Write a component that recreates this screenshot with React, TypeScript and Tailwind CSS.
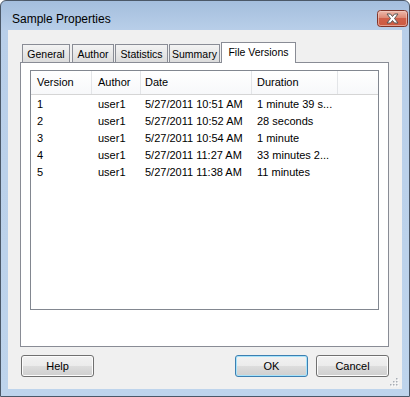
import React from "react";

const rows = [
  { v: "1", a: "user1", d: "5/27/2011 10:51 AM", t: "1 minute 39 s..." },
  { v: "2", a: "user1", d: "5/27/2011 10:52 AM", t: "28 seconds" },
  { v: "3", a: "user1", d: "5/27/2011 10:54 AM", t: "1 minute" },
  { v: "4", a: "user1", d: "5/27/2011 11:27 AM", t: "33 minutes 2..." },
  { v: "5", a: "user1", d: "5/27/2011 11:38 AM", t: "11 minutes" },
];

function CloseButton() {
  return (
    <svg width="31" height="17" viewBox="0 0 31 17">
      <defs>
        <linearGradient id="cb" x1="0" y1="0" x2="0" y2="1">
          <stop offset="0" stopColor="#eebdb0" />
          <stop offset="0.45" stopColor="#dd8a76" />
          <stop offset="0.5" stopColor="#d0604a" />
          <stop offset="1" stopColor="#cd5a40" />
        </linearGradient>
      </defs>
      <rect x="0.5" y="0.5" width="30" height="16" rx="3" fill="url(#cb)" stroke="#80352a" />
      <rect x="1.5" y="1.5" width="28" height="14" rx="2" fill="none" stroke="#f4cfc4" strokeOpacity="0.6" />
      <path
        d="M10 4 L13.5 4 L15.5 6.5 L17.5 4 L21 4 L17.5 8.5 L21 13 L17.5 13 L15.5 10.5 L13.5 13 L10 13 L13.5 8.5 Z"
        fill="#ffffff"
        stroke="#555555"
        strokeWidth="1"
        strokeLinejoin="round"
      />
    </svg>
  );
}

function Tab({ label, w, className = "" }: { label: string; w: string; className?: string }) {
  return (
    <div
      className={`${w} h-[18px] flex items-center justify-center border border-b-0 border-[#898c95] bg-gradient-to-b from-[#f3f3f3] to-[#dcdcdc] text-black text-[10.5px] ${className}`}
    >
      {label}
    </div>
  );
}

function Button({ label, def = false, className = "" }: { label: string; def?: boolean; className?: string }) {
  return (
    <div
      className={`w-[73px] h-[22px] rounded-[3px] border flex items-center justify-center text-black ${
        def
          ? "border-[#3c7fb1] shadow-[inset_0_0_0_1px_#a7e3fb]"
          : "border-[#707070] shadow-[inset_0_0_0_1px_#fcfcfc]"
      } bg-[linear-gradient(to_bottom,#f2f2f2_0%,#ebebeb_50%,#dddddd_50%,#cfcfcf_100%)] ${className}`}
    >
      {label}
    </div>
  );
}

export default function App() {
  return (
    <div className="w-[410px] h-[397px] bg-white font-['Liberation_Sans',Arial,sans-serif] text-[11px]">
      <div className="w-[410px] h-[397px] rounded-t-[6px] border border-[#4b5868] bg-[linear-gradient(to_bottom,#a4bedd_0px,#b9cfe9_30px,#bed4ec_100%)] flex flex-col">
        {/* Title bar */}
        <div className="h-[29px] flex items-start justify-between">
          <div className="pl-[11px] pt-[10px] text-[12px] leading-[16px] text-black">Sample Properties</div>
          <div className="mt-[9px] mr-[1px]">
            <CloseButton />
          </div>
        </div>

        {/* Client */}
        <div className="mx-[7px] h-[359px] bg-[#f0f0f0] relative flex flex-col pt-[12px] pl-[12px] pr-[13px]">
          {/* Tab strip */}
          <div className="h-[20px] flex items-end pl-[2px] leading-[14px]">
            <Tab label="General" w="w-[48px]" />
            <Tab label="Author" w="w-[42px]" className="ml-[2px]" />
            <Tab label="Statistics" w="w-[53px]" className="ml-[1px]" />
            <Tab label="Summary" w="w-[51px]" className="ml-[1px]" />
            <div className="w-[75px] h-[21px] -mb-[1px] relative z-10 ml-[1px] flex items-center justify-center pb-[2px] border border-b-0 border-[#898c95] bg-white text-black text-[10.5px]">
              File Versions
            </div>
          </div>

          {/* Panel */}
          <div className="h-[285px] border border-[#898c95] bg-white pt-[7px] pl-[9px] pr-[9px]">
            <div className="w-[349px] h-[240px] border border-[#828790] bg-white">
              {/* Header */}
              <div className="h-[24px] flex border-b border-[#d5d5d5] bg-gradient-to-b from-white to-[#f7f8fa] leading-[23px] text-black">
                <div className="w-[61px] pl-[6px] border-r border-[#e3e5e8]">Version</div>
                <div className="w-[49px] pl-[6px] border-r border-[#e3e5e8]">Author</div>
                <div className="w-[111px] pl-[4px] border-r border-[#e3e5e8]">Date</div>
                <div className="w-[86px] pl-[5px] border-r border-[#e3e5e8]">Duration</div>
                <div className="flex-1" />
              </div>
              {/* Rows */}
              <div className="pt-[1px]">
                {rows.map((r) => (
                  <div key={r.v} className="h-[17px] flex leading-[17px] text-black">
                    <div className="w-[61px] pl-[6px]">{r.v}</div>
                    <div className="w-[49px] pl-[6px]">{r.a}</div>
                    <div className="w-[111px] pl-[4px]">{r.d}</div>
                    <div className="w-[86px] pl-[5px] whitespace-nowrap">{r.t}</div>
                  </div>
                ))}
              </div>
            </div>
          </div>

          {/* Buttons */}
          <div className="mt-[8px] flex items-center pl-[1px]">
            <Button label="Help" />
            <div className="flex-1" />
            <Button label="OK" def />
            <Button label="Cancel" className="ml-[8px]" />
          </div>

          {/* Size grip */}
          <svg className="absolute right-[3px] bottom-[2px]" width="10" height="10" viewBox="0 0 10 10">
            {[
              [7, 1],
              [7, 4],
              [4, 4],
              [7, 7],
              [4, 7],
              [1, 7],
            ].map(([x, y]) => (
              <g key={`${x}-${y}`}>
                <rect x={x + 1} y={y + 1} width="1.5" height="1.5" fill="#ffffff" />
                <rect x={x} y={y} width="1.5" height="1.5" fill="#a8adb5" />
              </g>
            ))}
          </svg>
        </div>
      </div>
    </div>
  );
}
